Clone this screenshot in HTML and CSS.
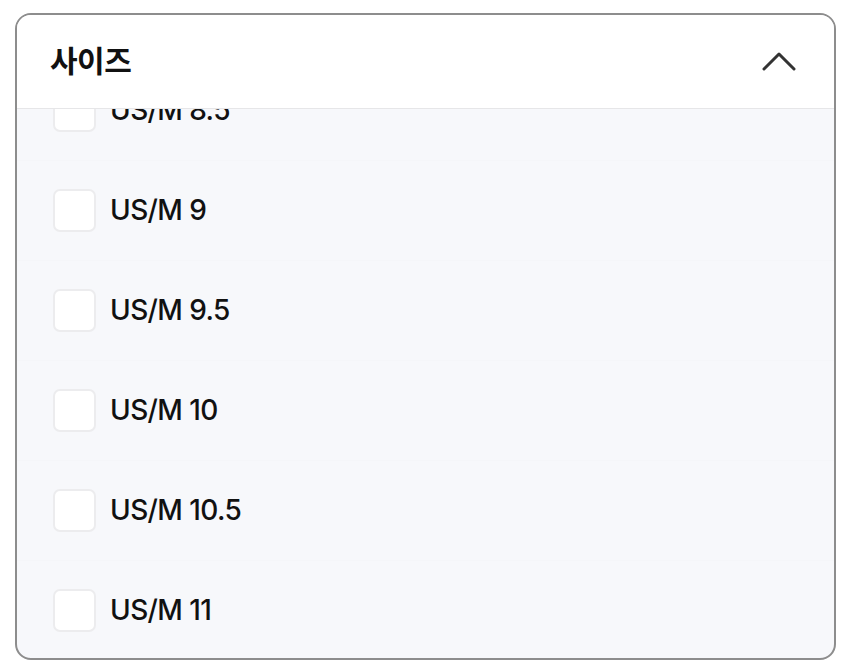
FILE: index.html
```html
<!DOCTYPE html>
<html lang="ko">
<head>
<meta charset="utf-8">
<link rel="stylesheet" href="styles.css">
</head>
<body>
<section class="panel">
  <header class="panel-head">
    <h2 class="title">사이즈</h2>
    <svg class="chev" width="34" height="20" viewBox="0 0 34 20"><path d="M2 18 L17 3 L32 18" fill="none" stroke="#333" stroke-width="3" stroke-linecap="round" stroke-linejoin="round"/></svg>
  </header>
  <div class="list-wrap">
    <ul class="list">
      <li class="row"><span class="box"></span><span class="label">US/M 8.5</span></li>
      <li class="row"><span class="box"></span><span class="label">US/M 9</span></li>
      <li class="row"><span class="box"></span><span class="label">US/M 9.5</span></li>
      <li class="row"><span class="box"></span><span class="label">US/M 10</span></li>
      <li class="row"><span class="box"></span><span class="label">US/M 10.5</span></li>
      <li class="row"><span class="box"></span><span class="label">US/M 11</span></li>
    </ul>
  </div>
</section>
</body>
</html>
```
FILE: styles.css
```css
html, body { margin: 0; padding: 0; background: #fff; }
body { padding: 13px 14px 0 15px; font-family: Inter, "Noto Sans CJK KR", sans-serif; color: #111; }
.panel {
  box-sizing: border-box;
  width: 821px;
  height: 647px;
  border: 2px solid #8d8d8d;
  border-radius: 16px;
  overflow: hidden;
  background: #f7f8fb;
  display: flex;
  flex-direction: column;
}
.panel-head {
  flex: 0 0 auto;
  height: 94px;
  background: #fff;
  border-bottom: 1px solid #e6e6e8;
  display: flex;
  align-items: center;
  justify-content: space-between;
  padding: 0 38px 0 33px;
  box-sizing: border-box;
  position: relative;
  z-index: 1;
}
.title {
  margin: 0;
  font-family: "Noto Sans CJK KR", sans-serif;
  font-size: 30px;
  font-weight: 700;
  letter-spacing: -0.5px;
  color: #111;
  position: relative;
  top: -3px;
}
.chev { display: block; margin-top: -2px; }
.list-wrap { flex: 1 1 auto; overflow: hidden; }
.list { list-style: none; margin: -48px 0 0; padding: 0; }
.row {
  height: 100px;
  display: flex;
  align-items: center;
  padding-left: 36px;
  box-sizing: border-box;
  border-bottom: 1px solid #f5f6f9;
}
.box {
  width: 43px;
  height: 43px;
  box-sizing: border-box;
  border: 2px solid #ececee;
  border-radius: 7px;
  background: #fff;
  flex: 0 0 auto;
}
.label {
  margin-left: 14px;
  font-size: 28px;
  font-weight: 500;
  letter-spacing: -0.6px;
  color: #111;
  position: relative;
  top: -1px;
}
```
